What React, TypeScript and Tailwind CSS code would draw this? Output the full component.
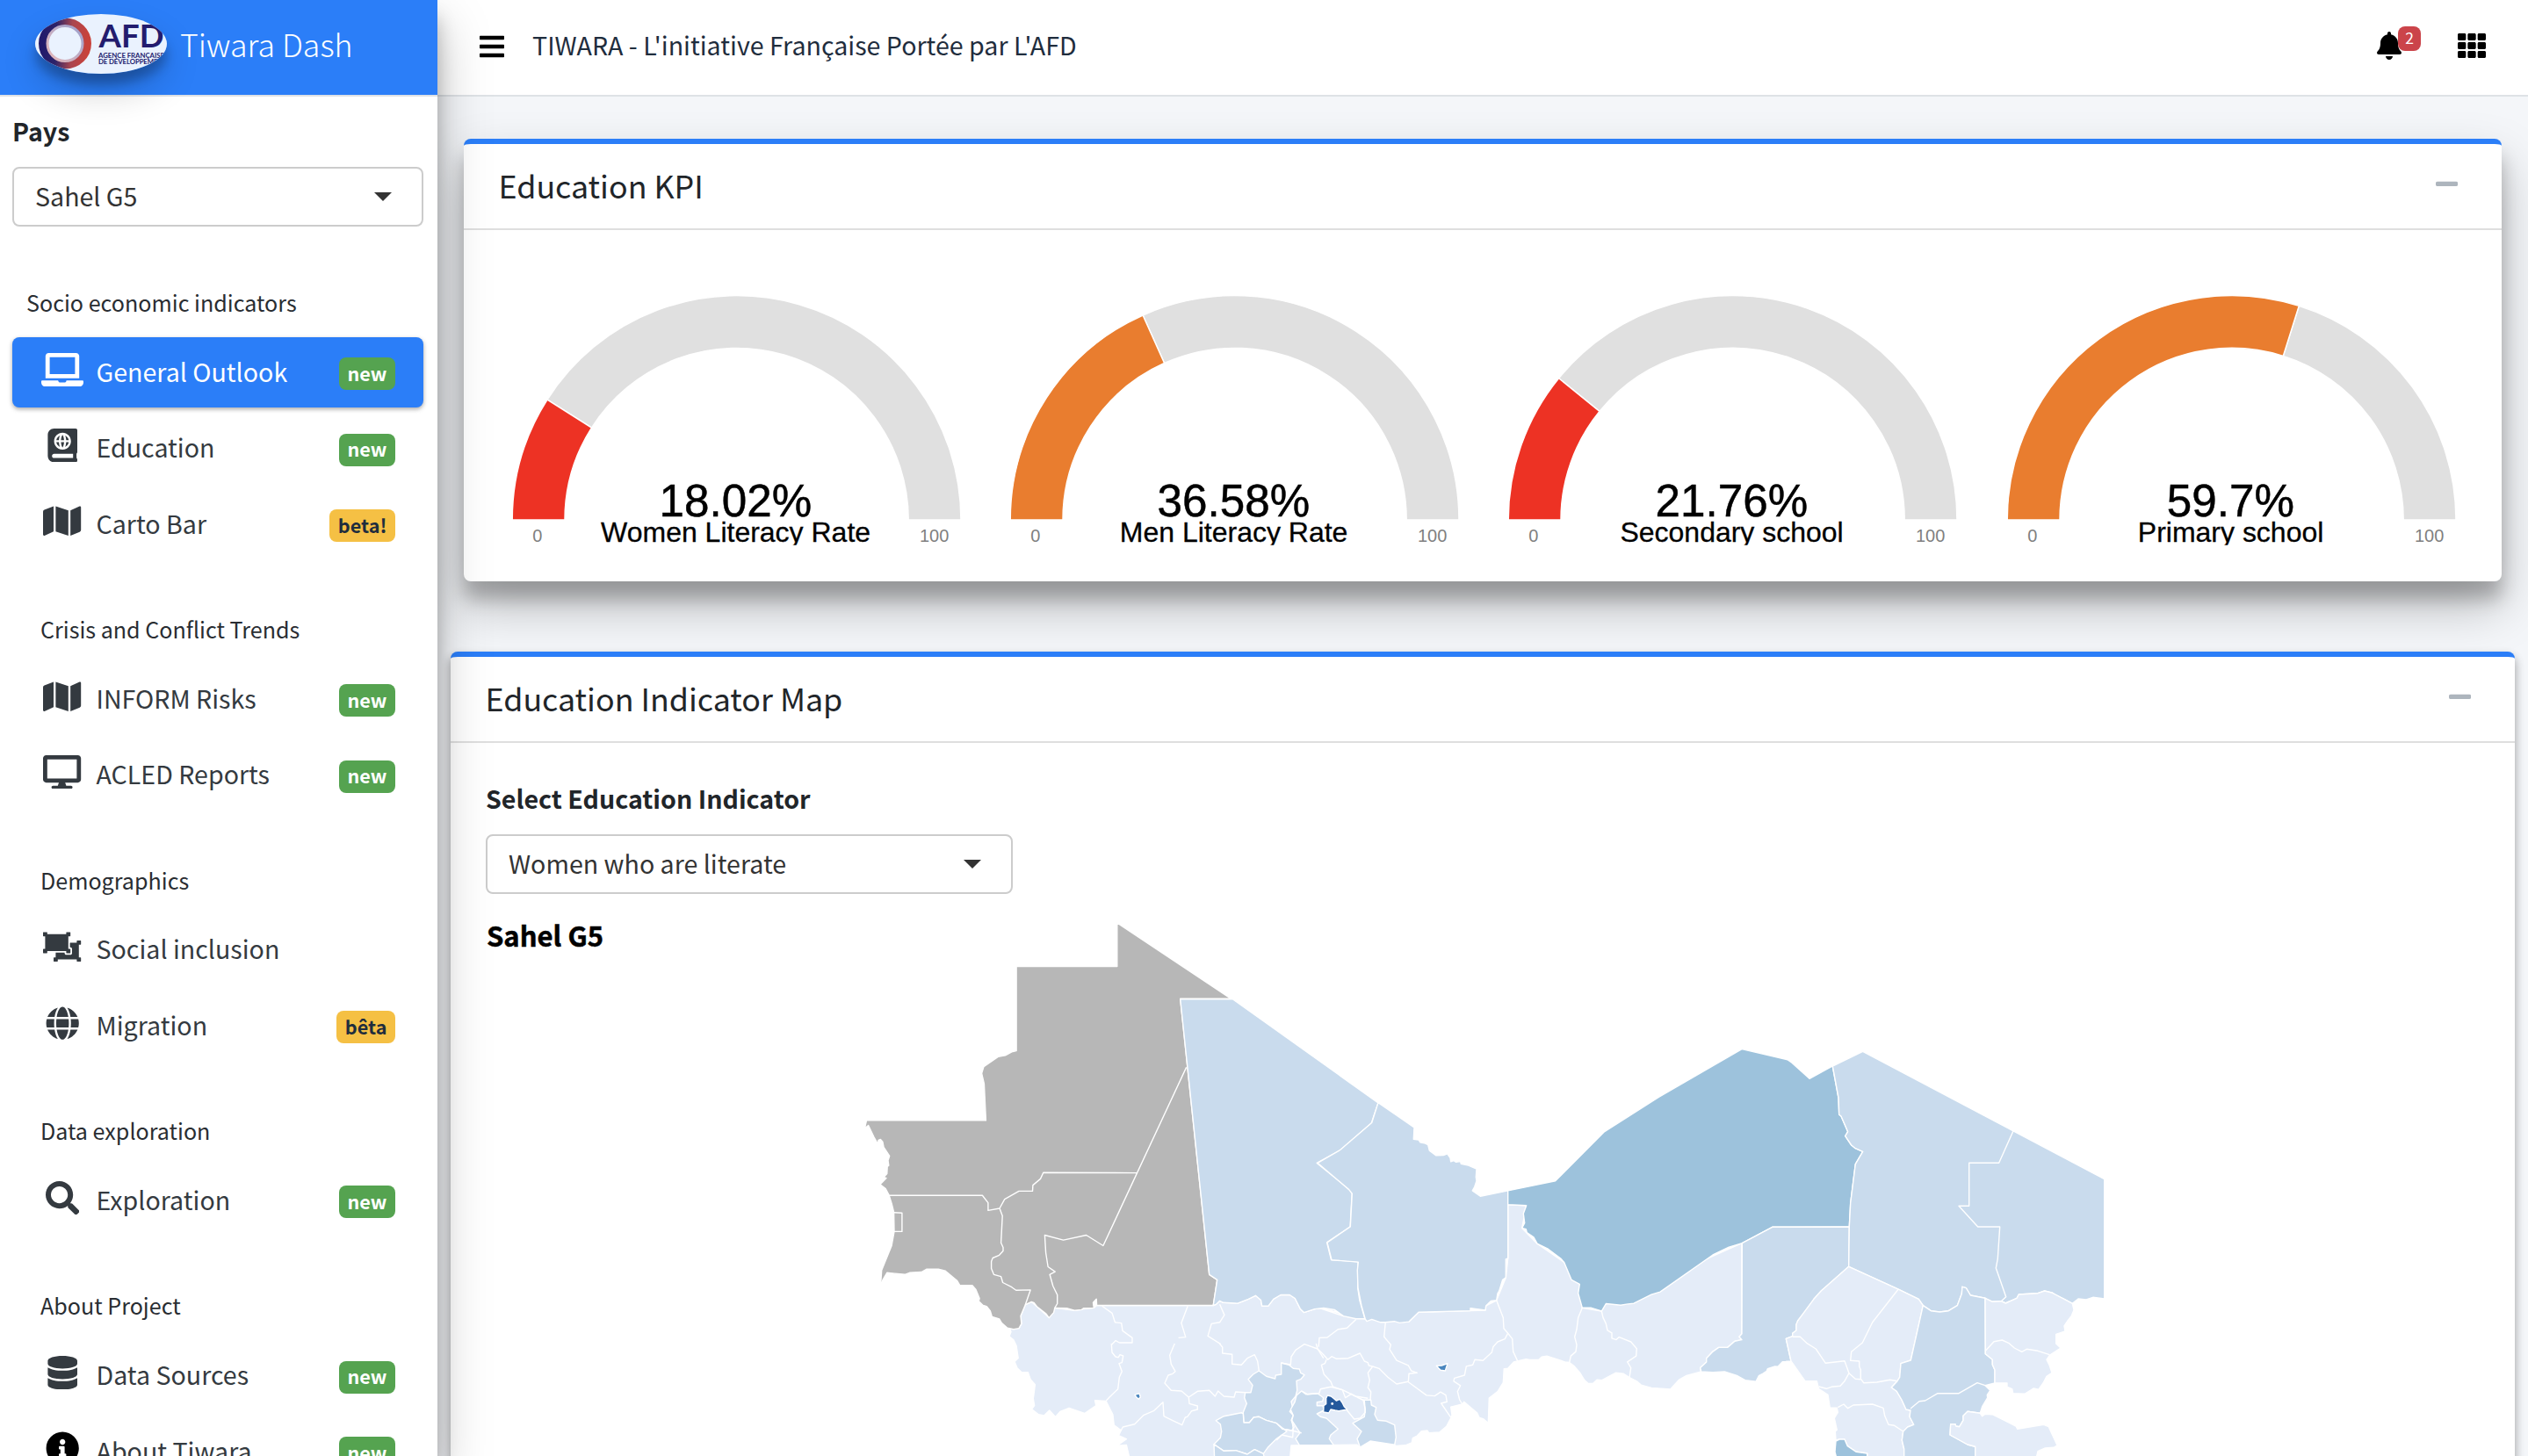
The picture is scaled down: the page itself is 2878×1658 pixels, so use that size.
import React from 'react';
import {
  FaAtlas,
  FaBars,
  FaBell,
  FaDatabase,
  FaDesktop,
  FaGlobe,
  FaInfoCircle,
  FaLaptop,
  FaMap,
  FaMinus,
  FaObjectUngroup,
  FaSearch,
  FaTh,
} from 'react-icons/fa';

/* ---------- Sidebar ---------- */

type Item = {
  label: string;
  Icon: React.ComponentType<{ className?: string }>;
  size?: string;
  badge?: string;
  active?: boolean;
  iconColor?: string;
};

const WIDE = 'w-[43.2px]';

const GROUPS: { title: string; items: Item[] }[] = [
  {
    title: 'Socio economic indicators',
    items: [
      { label: 'General Outlook', Icon: FaLaptop, size: 'w-12', badge: 'new', active: true },
      { label: 'Education', Icon: FaAtlas, badge: 'new' },
      { label: 'Carto Bar', Icon: FaMap, size: WIDE, badge: 'beta!' },
    ],
  },
  {
    title: 'Crisis and Conflict Trends',
    items: [
      { label: 'INFORM Risks', Icon: FaMap, size: WIDE, badge: 'new' },
      { label: 'ACLED Reports', Icon: FaDesktop, size: WIDE, badge: 'new' },
    ],
  },
  {
    title: 'Demographics',
    items: [
      { label: 'Social inclusion', Icon: FaObjectUngroup, size: WIDE },
      { label: 'Migration', Icon: FaGlobe, badge: 'bêta' },
    ],
  },
  { title: 'Data exploration', items: [{ label: 'Exploration', Icon: FaSearch, badge: 'new' }] },
  {
    title: 'About Project',
    items: [
      { label: 'Data Sources', Icon: FaDatabase, badge: 'new' },
      { label: 'About Tiwara', Icon: FaInfoCircle, badge: 'new', iconColor: 'text-black' },
    ],
  },
];

function NavItem({ label, Icon, size, badge, active, iconColor }: Item) {
  const tone = active
    ? 'bg-[#2b7ef8] text-white shadow-[0_2px_6px_rgba(0,0,0,0.12),0_2px_4px_rgba(0,0,0,0.24)]'
    : 'text-[#343a40]';
  const badgeTone = badge === 'new' ? 'bg-[#55a350] text-white' : 'bg-[#f5c044] text-[#1f2d3d]';
  return (
    <div className={`mb-[6.4px] flex h-20 items-start rounded-lg pl-8 pr-8 ${tone}`}>
      <span className={`mt-[17.8px] flex w-[50px] justify-center ${iconColor ?? ''}`}>
        <Icon className={`h-[38.4px] shrink-0 ${size ?? 'w-[38.4px]'}`} />
      </span>
      <span className="ml-[13.5px] whitespace-nowrap text-[28.6px] leading-[78px]">{label}</span>
      {badge && (
        <span
          className={`ml-auto mt-[23.5px] flex h-[37px] items-center rounded-lg px-[9.6px] text-[21.6px] font-bold leading-none ${badgeTone}`}
        >
          <span className="relative -top-px">{badge}</span>
        </span>
      )}
    </div>
  );
}

function Logo() {
  return (
    <div className="h-[68px] w-[150px] rounded-[50%] shadow-[0_20px_40px_rgba(0,0,0,0.19),0_12px_12px_rgba(0,0,0,0.23)]">
      <svg viewBox="0 0 150 68" className="block h-full w-full">
        <defs>
          <clipPath id="oval">
            <ellipse cx="75" cy="34" rx="75" ry="34" />
          </clipPath>
          <linearGradient id="ring" x1="0" y1="0.4" x2="1" y2="0.45">
            <stop offset="0" stopColor="#221a6b" />
            <stop offset="0.3" stopColor="#2d2368" />
            <stop offset="0.65" stopColor="#a94650" />
            <stop offset="1" stopColor="#c8423b" />
          </linearGradient>
          <linearGradient id="ringInner" x1="0" y1="1" x2="1" y2="0">
            <stop offset="0" stopColor="#e8b9b8" />
            <stop offset="1" stopColor="#9aa0cf" />
          </linearGradient>
        </defs>
        <g clipPath="url(#oval)">
          <rect width="150" height="68" fill="#eaf2fe" />
          <ellipse cx="34" cy="33.5" rx="25.5" ry="24.5" fill="none" stroke="url(#ring)" strokeWidth="9" />
          <ellipse cx="34" cy="33.5" rx="20" ry="20" fill="none" stroke="url(#ringInner)" strokeWidth="3" />
          <text x="72.5" y="38.3" fontFamily="Lato, sans-serif" fontWeight="700" fontSize="36.5" textLength="74" lengthAdjust="spacingAndGlyphs" fill="#231c6e">
            AFD
          </text>
          <text x="72" y="49.7" fontFamily="Lato, sans-serif" fontWeight="700" fontSize="7.8" textLength="75" fill="#231c6e">
            AGENCE FRANÇAISE
          </text>
          <text x="72" y="57.4" fontFamily="Lato, sans-serif" fontWeight="700" fontSize="7.8" textLength="78" fill="#231c6e">
            DE DÉVELOPPEMENT
          </text>
        </g>
      </svg>
    </div>
  );
}

function SelectBox({ value, className }: { value: string; className: string }) {
  return (
    <div className={`flex h-[68px] items-center justify-between rounded-lg border-2 border-[#ccc] bg-white pl-6 text-[28.6px] text-[#333] ${className}`}>
      <span className="relative -top-px leading-[64px]">{value}</span>
      <span className="-mt-px h-0 w-0 border-x-[10px] border-t-[10px] border-x-transparent border-t-[#333]" />
    </div>
  );
}

function Sidebar() {
  return (
    <aside className="relative z-10 h-full w-[498px] shrink-0 bg-white shadow-[0_28px_56px_rgba(0,0,0,0.25),0_20px_20px_rgba(0,0,0,0.22)]">
      <div className="flex h-[110px] items-start border-b-2 border-[#dee2e6] bg-[#2b7ef8] pl-10 pt-4">
        <Logo />
        <span className="ml-[15px] whitespace-nowrap text-[35.7px] font-light leading-[68px] text-white">Tiwara Dash</span>
      </div>
      <div className="pl-[14px] pr-4 pt-[15px]">
        <div className="text-[28.6px] font-bold leading-[48px] text-[#212529]">Pays</div>
        <SelectBox value="Sahel G5" className="mt-[17px] pr-[34px]" />
      </div>
      <nav className="pl-[14px] pr-4 pt-[13px]">
        {GROUPS.map((g, i) => (
          <div key={g.title}>
            <div
              className={`h-[112.8px] whitespace-nowrap pt-[52px] text-[25.1px] leading-[42px] text-[#292d32] ${i === 0 ? 'pl-4' : 'pl-8'}`}
            >
              {g.title}
            </div>
            {g.items.map((it) => (
              <NavItem key={it.label} {...it} />
            ))}
          </div>
        ))}
      </nav>
    </aside>
  );
}

/* ---------- Gauges ---------- */

type GaugeData = { value: number; label: string; color: string };

const GAUGES: GaugeData[] = [
  { value: 18.02, label: 'Women Literacy Rate', color: '#ed3224' },
  { value: 36.58, label: 'Men Literacy Rate', color: '#e97d2f' },
  { value: 21.76, label: 'Secondary school', color: '#ed3224' },
  { value: 59.7, label: 'Primary school', color: '#e97d2f' },
];

const R_OUT = 255.4;
const R_IN = 195.6;

function arc(from: number, to: number) {
  const cx = 283.6;
  const cy = 330;
  const p = (r: number, t: number) => {
    const a = Math.PI * (1 - t / 100);
    return `${(cx + r * Math.cos(a)).toFixed(2)} ${(cy - r * Math.sin(a)).toFixed(2)}`;
  };
  return `M${p(R_OUT, from)} A${R_OUT} ${R_OUT} 0 0 1 ${p(R_OUT, to)} L${p(R_IN, to)} A${R_IN} ${R_IN} 0 0 0 ${p(R_IN, from)} Z`;
}

function Gauge({ value, label, color }: GaugeData) {
  return (
    <svg viewBox="0 0 567.2 400" className="block h-[400px] w-[567.2px] font-['Liberation_Sans',sans-serif]" textAnchor="middle">
      <path d={arc(value, 100)} fill="#e0e0e0" stroke="#fff" strokeWidth="1.5" />
      <path d={arc(0, value)} fill={color} stroke="#fff" strokeWidth="1.5" />
      <text x="282.4" y="326" fontSize="51.2" fill="#000" stroke="#000" strokeWidth="0.5">{`${value}%`}</text>
      <text x="282.6" y="355" fontSize="32" fill="#000" stroke="#000" strokeWidth="0.3">
        {label}
      </text>
      <text x="56.9" y="355.2" fontSize="20" fill="#7f7f7f">
        0
      </text>
      <text x="508.6" y="355.2" fontSize="20" fill="#7f7f7f">
        100
      </text>
      <rect x="100" y="358.8" width="360" height="8" fill="#fff" />
    </svg>
  );
}

/* ---------- Map ---------- */

// Each sheet has its own survey grid: [origin x, origin y, x units per px, y units per px].
const SHEETS = {
  west: [960, 1030, 2.45, 2.497],
  mid: [1500, 1130, 3, 2.97],
  east: [1950, 1150, 3, 3],
  south: [1220, 1530, 3, 3],
} as const;

type Sheet = keyof typeof SHEETS;
type Seg = [Sheet, string];

function toPoints(segs: Seg[]) {
  return segs
    .map(([sheet, pts]) => {
      const [ox, oy, sx, sy] = SHEETS[sheet];
      return pts
        .trim()
        .split(/\s+/)
        .map((pt) => {
          const [x, y] = pt.split(',').map(Number);
          return `${(ox + x / sx).toFixed(1)},${(oy + y / sy).toFixed(1)}`;
        })
        .join(' ');
    })
    .join(' ');
}

const PALE = '#e4ecf8';
const LIGHT = '#c9dbed';
const MEDIUM = '#9dc2dc';
const GREY = '#b7b7b7';

const AREAS: { fill: string; segs: Seg[] }[] = [
  // Southern Mali, Burkina Faso and western Niger
  {
    fill: PALE,
    segs: [
      ['west', '707,1140 699,1147 670,1150 645,1154 590,1147 574,1175 540,1143 525,1130 508,1138 495,1170 497,1192 490,1205 465,1206 468,1215 463,1228 475,1238 483,1255 488,1290 478,1300 485,1318 497,1330 515,1330 522,1350 535,1365 530,1405 533,1425 526,1435 545,1450 560,1453 575,1438 592,1457 605,1442 630,1432 673,1447 705,1425 702,1410 733,1412 752,1450 755,1480 775,1495 768,1510 790,1520 764,1539 790,1537 797,1568'],
      ['south', '195,400 745,400 750,348 975,346 985,354 1020,333 1105,349'],
      ['mid', '253,1527 268,1534 300,1532 322,1523 325,1508 340,1500 355,1484 375,1482 380,1490 416,1488 440,1468 455,1440 459,1430 455,1402 494,1393 500,1385 545,1423 552,1438 567,1443 583,1457 586,1372 615,1350 634,1320 637,1273 650,1272 670,1250 712,1241 725,1243 755,1243 765,1233 783,1230 845,1250 860,1252 875,1263 895,1285 912,1312 925,1323 940,1323 955,1310 970,1312 1018,1287 1045,1290 1065,1303 1090,1315 1105,1328 1140,1338 1205,1342 1235,1310 1260,1296 1310,1283 1307,1270 1328,1250 1328,1238 1350,1215 1370,1201 1400,1201 1425,1180 1449,1175 1440,1165 1449,1155 1449,848 985,1053 970,1078 904,1067 895,987 842,913 750,850 698,797 713,721 650,718 650,900 643,965 611,1042 575,1060 573,1075 345,1082 312,1114 163,1105 0,1066'],
      ['west', '1395,1170 1370,1152 1340,1147 1315,1150 1285,1160 1275,1150 1260,1120 1245,1110 1220,1110 1200,1122 1185,1142 1168,1142 1165,1125 1150,1112 1130,1122 1100,1134 1060,1132 1050,1127 1040,1137 1032,1140'],
    ],
  },
  // Mauritania
  {
    fill: GREY,
    segs: [
      ['west', '764,52 1082,268 940,268 1021,1052 1043,1067 1032,1140 707,1140 706,1122 697,1132 699,1147 670,1148 665,1152 645,1154 625,1148 590,1147 587,1160 574,1175 565,1163 540,1143 532,1132 525,1130 508,1138 495,1170 497,1192 490,1205 475,1208 458,1204 442,1190 435,1178 415,1172 410,1155 400,1143 390,1140 378,1128 380,1120 370,1095 360,1083 325,1083 318,1070 285,1042 265,1037 232,1037 218,1045 185,1047 172,1052 122,1047 110,1068 104,1089 107,1040 135,970 142,930 141,875 135,850 128,827 118,808 103,796 120,778 113,775 122,765 123,745 127,742 125,728 129,715 113,690 110,675 104,668 98,670 97,682 85,660 70,628 60,636 65,614 398,614 393,510 386,480 392,461 432,433 452,429 470,419 483,416 483,176 764,176'],
    ],
  },
  // Tombouctou
  {
    fill: LIGHT,
    segs: [
      ['west', '940,269 1086,269 1492,564 1473,622 1387,698 1321,735 1414,812 1419,822 1414,916 1349,961 1361,1010 1436,1016 1435,1090 1440,1125 1455,1178 1430,1178 1395,1170 1370,1152 1340,1147 1315,1150 1285,1160 1275,1150 1260,1120 1245,1110 1220,1110 1200,1122 1185,1142 1168,1142 1165,1125 1150,1112 1130,1122 1100,1134 1060,1132 1050,1127 1040,1137 1032,1140 1043,1067 1021,1052'],
    ],
  },
  // Gao and Kidal
  {
    fill: LIGHT,
    segs: [
      ['mid', '207,373 330,457 328,497 345,499 350,507 365,510 377,516 382,535 405,552 430,551 443,546 453,560 455,573 465,569 473,574 488,572 490,580 515,585 543,597 541,625 543,638 536,658 529,671 556,690 650,671 650,900 643,903 643,965 632,972 620,1010 615,1018 611,1042 592,1044 575,1060 573,1075 522,1068 522,1077 345,1082 312,1114 280,1118 262,1113 232,1116 215,1116 185,1106 168,1113 163,1105 150,1060 138,1000 136,940 139,912 48,905 33,846 112,793 118,681 107,667 0,577 77,533 185,441'],
    ],
  },
  // Agadez
  {
    fill: MEDIUM,
    segs: [
      ['mid', '650,671 812,638 980,471 1165,355 1449,192'],
      ['east', '255,170 270,181 330,235 409,192 429,300 431,358 438,363 461,416 452,431 473,462 485,472 512,484 487,527 470,660 466,741 203,742 100,797'],
      ['mid', '1405,862 1350,888 1170,1013 1140,1022 1080,1052 1060,1054 1035,1058 985,1053 970,1078 935,1067 904,1067 890,1018 895,987 867,972 842,913 830,900 785,867 750,850 738,828 715,813 712,801 698,797 707,780 703,748 713,721 650,718'],
    ],
  },
  // Zinder
  {
    fill: LIGHT,
    segs: [
      ['east', '100,797 203,742 466,741 464,877 370,960 345,988 310,1038 290,1062 285,1075 285,1095 272,1105 272,1115 250,1123 267,1200 238,1202 222,1219 212,1218 187,1226 184,1234 170,1243 157,1250 147,1270 110,1265 82,1249 40,1236 0,1238'],
      ['mid', '1310,1283 1307,1270 1328,1250 1328,1238 1350,1215 1370,1201 1400,1201 1425,1180 1449,1175 1440,1165 1449,1155'],
    ],
  },
  // Northern Chad
  {
    fill: LIGHT,
    segs: [
      ['east', '409,192 512,142 1337,578 1337,987 1298,982 1275,990 1248,987 1228,1003 1200,988 1170,975 1160,967 1133,960 1110,968 1045,972 1038,985 1000,1002 985,995 955,997 930,985 880,975 865,950 852,946 850,970 835,1010 805,1028 775,1032 745,1028 718,1010 703,988 635,955 464,877 466,741 470,660 487,527 512,484 485,472 473,462 452,431 461,416 438,363 431,358 429,300'],
    ],
  },
  // Diffa, Lac and Kanem
  {
    fill: PALE,
    segs: [
      ['east', '464,877 635,955 703,988 718,1010 676,1197 642,1208 638,1255 630,1268 610,1290 628,1303 645,1332 660,1365 675,1368 672,1390 686,1417 665,1425 650,1440 646,1470 653,1500 653,1530 527,1530 527,1515 490,1510 460,1490 450,1467 432,1467 420,1470 418,1440 424,1435 415,1395 427,1375 424,1360 400,1360 393,1315 362,1295 355,1268 315,1268 267,1200 250,1123 272,1115 272,1105 285,1095 285,1075 290,1062 345,988 370,960'],
    ],
  },
  { fill: MEDIUM, segs: [['east', '420,1473 432,1467 450,1467 460,1490 490,1510 527,1515 527,1530 422,1530 417,1510']] },
  // Central Chad
  {
    fill: LIGHT,
    segs: [
      ['east', '718,1010 745,1028 775,1032 805,1028 835,1010 850,970 852,946 865,950 880,975 930,985 931,1175 955,1195 955,1212 963,1230 963,1275 930,1283 947,1300 937,1315 938,1325 920,1355 913,1378 870,1372 855,1387 855,1402 842,1424 830,1422 828,1415 812,1415 810,1452 870,1485 896,1492 896,1530 653,1530 653,1500 646,1470 650,1440 665,1425 686,1417 672,1390 675,1368 660,1365 645,1332 628,1303 610,1290 630,1268 638,1255 642,1208 676,1197'],
    ],
  },
  // Eastern Chad
  {
    fill: PALE,
    segs: [
      ['east', '930,985 955,997 985,995 1000,1002 1038,985 1045,972 1110,968 1133,960 1160,967 1200,988 1228,1003 1233,1025 1225,1045 1212,1062 1200,1080 1203,1098 1172,1108 1172,1140 1188,1155 1150,1180 1140,1195 1150,1215 1158,1240 1140,1252 1128,1275 1112,1297 1095,1293 1065,1312 1025,1310 1022,1295 1005,1288 1005,1275 963,1275 963,1230 955,1212 955,1195 931,1175'],
    ],
  },
  {
    fill: PALE,
    segs: [
      ['east', '870,1372 913,1378 920,1388 930,1381 955,1382 1035,1422 1040,1432 1130,1417 1147,1424 1176,1487 1165,1495 1135,1497 1110,1508 1105,1530 896,1530 896,1492 870,1485 810,1452 812,1415 828,1415 830,1422 842,1424 855,1402 855,1387'],
    ],
  },
  // Burkina Faso regions
  {
    fill: LIGHT,
    segs: [
      ['south', '716,66 742,73 757,85 778,87 782,100 795,107 782,122 768,127 770,160 765,180 750,198 755,220 745,232 757,245 750,262 760,285 752,297 710,290 700,272 665,262 640,250 622,252 607,270 588,270 586,235 598,205 590,185 593,167 612,167 618,142 603,122 620,105 640,93 665,112 695,120 697,108 716,105'],
    ],
  },
  {
    fill: LIGHT,
    segs: [
      ['south', '580,236 586,240 588,270 607,270 622,252 640,250 665,262 700,272 735,300 700,325 670,355 655,376 625,362 600,378 560,365 520,367 486,344 508,322 512,300 508,275 493,263 520,248'],
    ],
  },
  { fill: LIGHT, segs: [['south', '486,344 520,367 560,365 600,378 625,362 655,376 660,400 488,400']] },
  {
    fill: LIGHT,
    segs: [
      ['south', '785,162 800,173 840,170 860,185 857,197 838,200 838,212 858,212 862,228 838,240 850,250 870,255 892,275 910,292 885,312 880,325 895,347 778,347 765,325 780,305 770,290 752,262 757,245 748,225 762,200 768,177'],
    ],
  },
  {
    fill: LIGHT,
    segs: [
      ['south', '996,193 1022,193 1024,210 1040,218 1035,242 1045,262 1075,265 1103,278 1108,320 1103,346 1020,333 985,354 975,325 990,300 960,272 1000,250 1003,225'],
    ],
  },
  {
    fill: '#25599c',
    segs: [['south', '874,177 886,180 896,188 904,195 916,190 925,203 931,215 941,225 912,230 900,228 885,225 878,237 860,234 861,212 869,206 869,187']],
  },
  { fill: '#4a86be', segs: [['south', '216,175 231,170 235,182 229,190 221,183']] },
  { fill: '#4a86be', segs: [['south', '1246,76 1264,75 1284,68 1276,93 1260,91']] },
];

const BORDERS: Seg[] = [
  ['west', '128,827 388,827 404,848 404,870 436,864 450,838 490,815 528,815 529,798 550,780 558,762 820,763'],
  ['west', '436,864 444,885 440,962 446,975 446,985 435,997 417,1005 413,1015 413,1035 420,1052 440,1058 445,1075 470,1088 482,1097 522,1096 508,1138'],
  ['west', '957,463 725,970 678,940 614,954 562,940 565,990 571,1030 591,1044 576,1052 585,1085 597,1110 597,1135 590,1147'],
  ['west', '141,876 164,877 164,930 142,930'],
  ['west', '722,1142 750,1162 758,1188 776,1190 779,1212 806,1232 806,1246 770,1246 760,1240 748,1252'],
  ['south', '136,0 138,30 150,45 160,47 165,38 176,42 172,65 162,68 172,95 163,115 158,155 130,182 118,195'],
  ['west', '961,1142 943,1190 955,1230 935,1232'],
  ['south', '352,0 335,40 340,70 354,95 345,103 330,108 318,135 340,160 375,162 400,183 402,205 430,213 430,225 410,230 395,250 388,252 377,278 345,263 315,248 312,200 280,230 245,245 215,275 175,285 168,298'],
  ['south', '400,183 430,163 470,160 490,180 500,162 520,180 555,183 560,165 593,167'],
  ['west', '1050,1137 1063,1167 1050,1188 1027,1192 1017,1227 1053,1250'],
  ['south', '505,0 515,12 515,33 548,37 548,70 580,73 600,50 625,38 635,60 640,93'],
  ['south', '716,66 748,72 750,45 765,22 795,2 840,18 860,50'],
  ['west', '1430,1180 1405,1204 1380,1208 1350,1231 1328,1232 1326,1258'],
  ['south', '835,0 840,18 862,40 875,55 888,44 905,52 945,50 985,33 1000,60 1012,65 1015,75 1028,78'],
  ['south', '870,55 865,68 853,73 862,105 885,130 892,147 925,158 970,180 1012,187'],
  ['south', '1028,78 1012,100 1018,125 1012,150 1022,165 1020,193'],
  ['south', '1028,78 1050,85 1080,115 1110,138 1150,130'],
  ['mid', '232,1116 227,1165 250,1192 246,1208 270,1245 310,1262 320,1280 340,1287 312,1290 310,1318'],
  ['mid', '310,1318 372,1363 400,1365 420,1352 438,1362 442,1385 422,1390 455,1438'],
  ['mid', '611,1042 634,1100 636,1137 650,1153 665,1172 668,1215 683,1247'],
  ['mid', '650,1153 640,1172 615,1182 600,1198 595,1218 565,1245 537,1242 530,1260 508,1265 502,1295 467,1305 465,1315 488,1330 478,1350 485,1378 494,1393'],
  ['mid', '904,1067 890,1100 885,1140 878,1165 885,1192 882,1215 865,1230 860,1252'],
  ['mid', '970,1078 975,1100 985,1120 990,1143 1005,1152 1005,1170 1020,1175 1030,1166 1070,1182 1090,1205 1088,1230 1058,1250 1070,1270 1065,1303'],
  ['south', '786,162 805,173 845,170 850,155 885,148 925,158 935,185 955,172 975,183 1000,195 1003,235 985,255 965,258 938,225'],
  ['south', '752,262 757,290 755,320 718,312 700,330'],
  ['south', '700,272 720,292 752,297 785,305'],
  ['east', '1028,409 977,523 875,523 875,670 840,670 905,741 980,741 973,850 967,882 1001,980 985,995'],
  ['east', '633,955 545,1067 511,1137 473,1168 470,1198 500,1200 500,1218 505,1230 505,1260 515,1274 560,1272 605,1264 630,1268'],
  ['east', '272,1117 298,1117 320,1138 352,1158 385,1207 450,1199 465,1241 450,1268 435,1285 405,1288 388,1294 362,1287'],
  ['east', '465,1241 487,1261 505,1262'],
  ['east', '427,1358 447,1347 461,1361 480,1350 545,1347 582,1360 587,1387 600,1417 620,1420 650,1440'],
  ['east', '675,1362 705,1337 725,1335 768,1310 840,1310 903,1274 930,1283'],
  ['east', '931,1165 960,1133 988,1128 1010,1138 1030,1155 1055,1168 1072,1159 1110,1165 1150,1178'],
];

function SahelMap() {
  return (
    <svg viewBox="553 1036 2271 622" className="mt-[18px] block h-[622px] w-[2271px] shrink-0">
      <text x="554" y="1077.7" fontSize="31.5" fontWeight="700" textLength="133" lengthAdjust="spacingAndGlyphs" fill="#000" stroke="#000" strokeWidth="0.5">
        Sahel G5
      </text>
      <g stroke="#fff" strokeWidth="1.4" strokeLinejoin="round">
        {AREAS.map((a, i) => (
          <polygon key={i} points={toPoints(a.segs)} fill={a.fill} />
        ))}
      </g>
      <g stroke="#fff" strokeWidth="1.4" fill="none" strokeLinejoin="round">
        {BORDERS.map((b, i) => (
          <polyline key={i} points={toPoints([b])} />
        ))}
      </g>
      <circle cx="1516.7" cy="1598.5" r="1.4" fill="#fff" />
    </svg>
  );
}

/* ---------- Page ---------- */

function CardHeader({ title }: { title: string }) {
  return (
    <div className="flex h-[98px] items-start justify-between border-b-2 border-[#dfdfdf] pl-[39.5px] pr-[50px] text-[#212529]">
      <h3 className="whitespace-nowrap text-[35.8px] leading-[92px]">{title}</h3>
      <FaMinus className="mt-[30.5px] h-[28.8px] w-[25.2px] text-[#adb5bd]" />
    </div>
  );
}

export default function App() {
  return (
    <div className="flex h-[1658px] w-[2878px] overflow-hidden bg-[#f4f6f9] font-['Noto_Sans_CJK_SC','Noto_Sans',sans-serif]">
      <Sidebar />
      <div className="flex min-w-0 flex-1 flex-col">
        <header className="flex h-[110px] shrink-0 items-start border-b-2 border-[#dee2e6] bg-white pl-12 pr-12">
          <FaBars className="mt-[36.5px] h-8 w-7 text-black" />
          <span className="ml-8 whitespace-nowrap text-[28.6px] leading-[102px] text-[#1f2d3d]">
            TIWARA - L'initiative Française Portée par L'AFD
          </span>
          <div className="relative ml-auto mt-9">
            <FaBell className="h-8 w-7 text-black" />
            <span className="absolute -top-1.5 left-6 flex h-7 w-[26px] items-center justify-center rounded-lg bg-[#cb444a] text-[17.5px] leading-none text-white">
              <span className="relative -top-px">2</span>
            </span>
          </div>
          <FaTh className="ml-16 mt-9 h-8 w-8 text-black" />
        </header>
        <main className="flex flex-1 flex-col">
          <section className="ml-[30px] mr-[30px] mt-12 h-[504px] shrink-0 rounded-lg border-t-[6px] border-[#2b7ef8] bg-white shadow-[0_28px_56px_rgba(0,0,0,0.25),0_20px_20px_rgba(0,0,0,0.22)]">
            <CardHeader title="Education KPI" />
            <div className="flex pl-[27px]">
              {GAUGES.map((g) => (
                <Gauge key={g.label} {...g} />
              ))}
            </div>
          </section>
          <section className="ml-[15px] mr-[15px] mt-20 flex h-[1200px] shrink-0 flex-col rounded-lg border-t-[6px] border-[#2b7ef8] bg-white shadow-[0_6px_12px_rgba(0,0,0,0.16),0_6px_12px_rgba(0,0,0,0.23)]">
            <CardHeader title="Education Indicator Map" />
            <div className="flex flex-col pl-10 pt-[39px]">
              <label className="text-[28.6px] font-bold leading-[48px] text-[#212529]">Select Education Indicator</label>
              <SelectBox value="Women who are literate" className="mt-[17px] w-[600px] pr-[34px]" />
              <SahelMap />
            </div>
          </section>
        </main>
      </div>
    </div>
  );
}
